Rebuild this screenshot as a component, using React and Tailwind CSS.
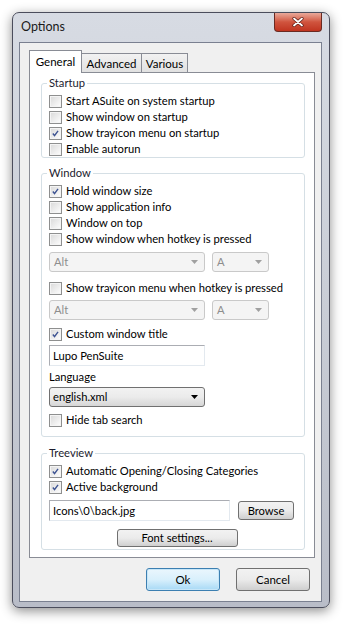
import React from "react";

const font = { fontFamily: 'Lato, "Noto Sans", sans-serif' };

function Check({ checked, label }) {
  return (
    <div className="flex h-[16px] items-center whitespace-nowrap pl-[7px]">
      <div className="flex h-[13px] w-[13px] shrink-0 items-center justify-center border border-[#8e8f8f] bg-white">
        <div className="flex h-[11px] w-[11px] items-center justify-center border border-[#f4f4f4] bg-gradient-to-br from-[#dcdcdc] to-[#fbfbfb]">
          {checked && (
            <svg width="11" height="11" viewBox="0 0 11 11">
              <path d="M2.2 5.6 L4.3 8 L8.6 2.2" fill="none" stroke="#3d5392" strokeWidth="1.7" />
            </svg>
          )}
        </div>
      </div>
      <span className="ml-[4px] text-[11.2px] leading-none text-black">{label}</span>
    </div>
  );
}

function DisabledSelect({ value, w }) {
  return (
    <div className={`flex h-[20px] ${w} items-center justify-between rounded-[3px] border border-[#c9c9c9] bg-[#f4f4f4] pl-[4px] pr-[6px]`}>
      <span className="text-[11.2px] leading-none text-[#8d8d8d]">{value}</span>
      <svg width="7" height="4" viewBox="0 0 7 4"><path d="M0 0 H7 L3.5 4 Z" fill="#a0a0a0" /></svg>
    </div>
  );
}

function Group({ title, children, className = "" }) {
  return (
    <fieldset className={`rounded-[3px] border border-[#d5dfe5] ${className}`}>
      <legend className="ml-[5px] px-[2px] text-[11.2px] leading-[14px] text-[#1b1b2e]">{title}</legend>
      {children}
    </fieldset>
  );
}

function Btn({ children, className = "" }) {
  return (
    <div className={`flex items-center justify-center rounded-[3px] border border-[#707070] bg-gradient-to-b from-[#f2f2f2] via-[#ebebeb] to-[#cfcfcf] text-[11.2px] leading-none text-black ${className}`}>
      {children}
    </div>
  );
}

export default function App() {
  return (
    <div className="h-[630px] w-[350px] overflow-hidden bg-white pl-[12px] pt-[12px]" style={font}>
      <div className="flex h-[596px] w-[318px] flex-col rounded-[7px] border border-[#4b4d5c] bg-gradient-to-b from-[#d7dbe3] via-[#c9cdd6] to-[#b9bdc8] shadow-[0_3px_12px_rgba(0,0,0,0.45)]">
        {/* title bar */}
        <div className="flex h-[29px] items-start justify-between">
          <span className="ml-[8px] mt-[6px] text-[12.5px] leading-[16px] text-[#1a1a1a]">Options</span>
          <div className="mr-[7px] flex h-[19px] w-[48px] items-center justify-center rounded-b-[4px] border border-t-0 border-[#6a2a22] bg-gradient-to-b from-[#e9a99a] via-[#d0543e] to-[#c0341f]">
            <svg width="12" height="10" viewBox="0 0 12 10">
              <path d="M2 1.5 L10 8.5 M10 1.5 L2 8.5" stroke="#5a1a12" strokeWidth="3.2" strokeLinecap="round" />
              <path d="M2 1.5 L10 8.5 M10 1.5 L2 8.5" stroke="#ffffff" strokeWidth="1.8" strokeLinecap="round" />
            </svg>
          </div>
        </div>
        {/* client area */}
        <div className="ml-[6px] flex h-[560px] w-[303px] flex-col border border-[#7a8090] bg-[#f0f0f0] pl-[9px] pr-[7px] pt-[7px]">
          {/* tabs */}
          <div className="flex h-[23px] items-end">
            <div className="relative z-10 flex h-[23px] w-[53px] items-center justify-center border border-b-0 border-[#898c95] bg-white text-[11.5px] leading-none text-black">
              General
            </div>
            <div className="flex h-[20px] w-[60px] items-center justify-center border border-b-0 border-l-0 border-[#898c95] bg-gradient-to-b from-[#f2f2f2] to-[#e0e0e0] text-[11.5px] leading-none text-black">
              Advanced
            </div>
            <div className="flex h-[20px] w-[46px] items-center justify-center border border-b-0 border-l-0 border-[#898c95] bg-gradient-to-b from-[#f2f2f2] to-[#e0e0e0] text-[11.5px] leading-none text-black">
              Various
            </div>
          </div>
          {/* panel */}
          <div className="-mt-px flex h-[486px] w-[286px] flex-col border border-[#898c95] bg-white pl-[11px] pr-[9px] pt-[3px]">
            <Group title="Startup">
              <div className="mt-[3px] flex flex-col">
                <Check label="Start ASuite on system startup" />
                <Check label="Show window on startup" />
                <Check checked label="Show trayicon menu on startup" />
                <Check label="Enable autorun" />
              </div>
            </Group>
            <Group title="Window" className="mt-[8px]">
              <div className="mt-[3px] flex flex-col pb-[8px]">
                <Check checked label="Hold window size" />
                <Check label="Show application info" />
                <Check label="Window on top" />
                <Check label="Show window when hotkey is pressed" />
                <div className="ml-[7px] mt-[5px] flex gap-[7px]">
                  <DisabledSelect value="Alt" w="w-[156px]" />
                  <DisabledSelect value="A" w="w-[57px]" />
                </div>
                <div className="mt-[8px]">
                  <Check label="Show trayicon menu when hotkey is pressed" />
                </div>
                <div className="ml-[7px] mt-[4px] flex gap-[7px]">
                  <DisabledSelect value="Alt" w="w-[156px]" />
                  <DisabledSelect value="A" w="w-[57px]" />
                </div>
                <div className="mt-[6px]">
                  <Check checked label="Custom window title" />
                </div>
                <div className="ml-[7px] mt-[3px] flex h-[21px] w-[156px] items-center border border-[#abadb3] border-r-[#e3e9ef] border-b-[#e3e9ef] bg-white pl-[3px] text-[11.2px] leading-none text-black">
                  Lupo PenSuite
                </div>
                <div className="ml-[7px] mt-[4px] h-[14px] text-[11.2px] leading-[14px] text-black">Language</div>
                <div className="ml-[7px] mt-[3px] flex h-[20px] w-[156px] items-center justify-between rounded-[3px] border border-[#707070] bg-gradient-to-b from-[#f2f2f2] via-[#ebebeb] to-[#d6d6d6] pl-[3px] pr-[6px]">
                  <span className="text-[11.2px] leading-none text-black">english.xml</span>
                  <svg width="7" height="4" viewBox="0 0 7 4"><path d="M0 0 H7 L3.5 4 Z" fill="#000" /></svg>
                </div>
                <div className="mt-[5px]">
                  <Check label="Hide tab search" />
                </div>
              </div>
            </Group>
            <Group title="Treeview" className="mt-[9px]">
              <div className="mt-[3px] flex flex-col pb-[2px]">
                <Check checked label="Automatic Opening/Closing Categories" />
                <Check checked label="Active background" />
                <div className="ml-[7px] mt-[5px] flex items-center gap-[8px]">
                  <div className="flex h-[21px] w-[181px] items-center border border-[#abadb3] border-r-[#e3e9ef] border-b-[#e3e9ef] bg-white pl-[3px] text-[11.2px] leading-none text-black">
                    Icons\0\back.jpg
                  </div>
                  <Btn className="h-[19px] w-[56px]">Browse</Btn>
                </div>
                <div className="mt-[8px] flex justify-center pl-[8px]">
                  <Btn className="h-[18px] w-[121px]">Font settings...</Btn>
                </div>
              </div>
            </Group>
          </div>
          {/* buttons */}
          <div className="mt-[10px] flex justify-end gap-[16px] pr-[4px]">
            <div className="flex h-[23px] w-[74px] items-center justify-center rounded-[3px] border border-[#3c7fb1] bg-gradient-to-b from-[#eaf6fd] via-[#d9f0fc] to-[#a7d9f5] text-[11.5px] leading-none text-black shadow-[inset_0_0_0_1px_#c7e6f8]">
              Ok
            </div>
            <Btn className="h-[23px] w-[74px] text-[11.5px]">Cancel</Btn>
          </div>
        </div>
      </div>
    </div>
  );
}
